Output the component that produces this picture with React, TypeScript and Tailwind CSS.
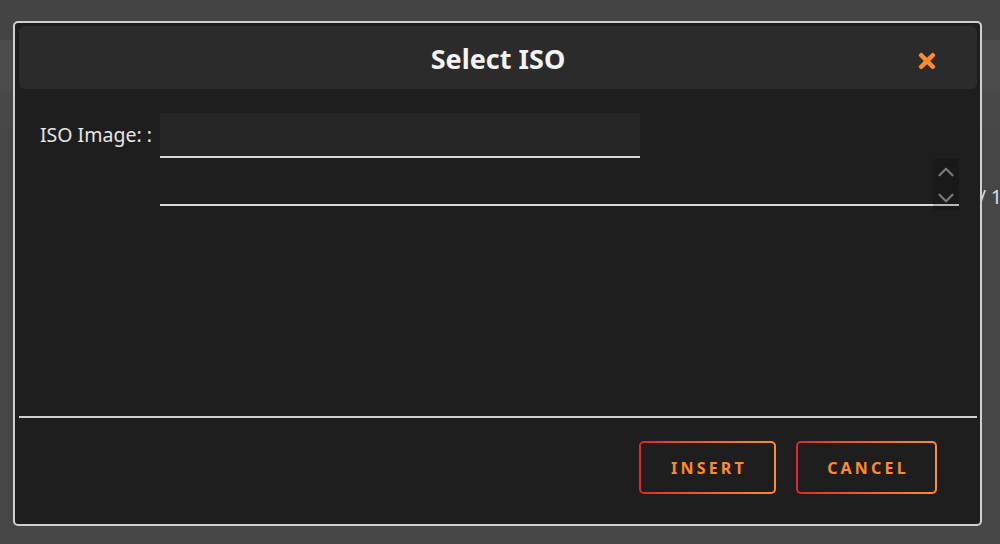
import { ChevronUp, ChevronDown } from "lucide-react";
import { FaTimes } from "react-icons/fa";

const font = { fontFamily: '"Noto Sans", "Open Sans", sans-serif' };

const GradientButton = ({ label, width }: { label: string; width: string }) => (
  <div className={`${width} h-[53px] rounded-[5px] bg-gradient-to-r from-[#e0242a] to-[#ff8c2b] p-[2px]`}>
    <button className="w-full h-full rounded-[3px] bg-[#1e1e1e] text-[#ff8a2b] text-[16px] font-bold tracking-[0.2em] flex items-center justify-center pl-[3px]">
      {label}
    </button>
  </div>
);

const App = () => {
  return (
    <div className="relative w-[1000px] h-[544px] bg-[#464646] overflow-hidden" style={font}>
      {/* page behind the modal */}
      <div className="h-[40px] bg-[#444444]" />
      <div className="h-[52px] bg-[#4b4b4b]" />
      <div className="h-[36px] bg-[#484848]" />

      <span className="absolute left-[979px] top-[183px] text-[19px] text-[#d5e0ee] whitespace-nowrap">/ 1</span>

      {/* modal */}
      <div className="absolute left-[13px] top-[21px] w-[969px] h-[505px] rounded-[5px] border-2 border-[#d0d0d0] bg-[#1e1e1e] flex flex-col pt-[3px] pl-[4px] pr-[3px]">
        <div className="relative h-[63px] rounded-md bg-[#2b2b2b] flex items-center justify-center">
          <h2 className="text-[27px] font-bold text-[#f2f2f2] mt-[4px]">Select ISO</h2>
          <FaTimes className="absolute right-[38px] top-[23px] text-[#ff8a2b]" size={24} />
        </div>

        <div className="h-[327px] pt-[24px] pl-[21px] pr-[18px]">
          <div className="flex items-center">
            <label className="w-[120px] text-[19.5px] text-[#e6e6e6] pb-[1px]">ISO Image: :</label>
            <div className="w-[480px] h-[45px] bg-[#262626] border-b-2 border-[#d8d8d8]" />
          </div>
          <div className="relative ml-[120px] mt-[1px] h-[47px] border-b-2 border-[#d8d8d8]">
            <div className="absolute right-0 top-0 w-[26px] h-[52px] bg-black/15 flex flex-col items-center justify-between text-[#7a7a7a]">
              <ChevronUp size={26} strokeWidth={2} />
              <ChevronDown size={26} strokeWidth={2} />
            </div>
          </div>
        </div>

        <div className="h-[2px] bg-[#cfcfcf]" />

        <div className="flex justify-end gap-[20px] pt-[23px] pr-[40px]">
          <GradientButton label="INSERT" width="w-[137px]" />
          <GradientButton label="CANCEL" width="w-[141px]" />
        </div>
      </div>
    </div>
  );
};

export default App;
